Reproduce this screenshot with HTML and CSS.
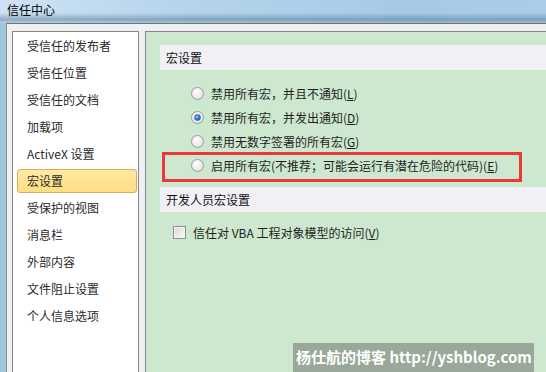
FILE: index.html
```html
<!DOCTYPE html>
<html lang="zh-CN">
<head>
    <meta charset="UTF-8">
    <title>信任中心</title>
    <link rel="stylesheet" href="styles.css">
</head>
<body>
    <div class="window">
        <div class="title-bar">信任中心</div>
        <div class="frame">
            <ul class="nav">
                <li>受信任的发布者</li>
                <li>受信任位置</li>
                <li>受信任的文档</li>
                <li>加载项</li>
                <li>ActiveX 设置</li>
                <li class="active">宏设置</li>
                <li>受保护的视图</li>
                <li>消息栏</li>
                <li>外部内容</li>
                <li>文件阻止设置</li>
                <li>个人信息选项</li>
            </ul>
            <div class="content">
                <div class="section-title">宏设置</div>
                <div class="options">
                    <div class="option"><span class="radio"></span>禁用所有宏，并且不通知(<u>L</u>)</div>
                    <div class="option"><span class="radio checked"></span>禁用所有宏，并发出通知(<u>D</u>)</div>
                    <div class="option"><span class="radio"></span>禁用无数字签署的所有宏(<u>G</u>)</div>
                    <div class="option"><span class="radio"></span>启用所有宏(不推荐；可能会运行有潜在危险的代码)(<u>E</u>)</div>
                </div>
                <div class="section-title">开发人员宏设置</div>
                <div class="check-row"><span class="checkbox"></span>信任对 VBA 工程对象模型的访问(<u>V</u>)</div>

                <!-- red annotation box -->
                <div class="highlight-box"></div>
            </div>
        </div>
        <div class="watermark">杨仕航的博客 http://yshblog.com</div>
    </div>
</body>
</html>
```

FILE: styles.css
```css
body {
    margin: 0;
    width: 546px;
    height: 372px;
    overflow: hidden;
    font-family: "Noto Sans CJK SC", "Microsoft YaHei", sans-serif;
    font-size: 12px;
    color: #1e1e1e;
}
.window {
    position: relative;
    width: 570px;
    height: 372px;
    overflow: hidden;
    background: #9fc7dc;
}
.title-bar {
    height: 23px;
    line-height: 20px;
    padding-left: 7px;
    font-size: 12px;
    color: #000;
    background:
        linear-gradient(to bottom, rgba(255, 255, 255, 0) 55%, rgba(70, 110, 135, 0.45) 85%, rgba(120, 160, 185, 0.3) 100%),
        linear-gradient(to right, #cfe2f4 0%, #b7d5ec 30%, #a6cae6 70%, #aacde8 100%);
}
.frame {
    display: flex;
    margin-left: 6px;
    height: 380px;
    padding: 7px 0 0 5px;
    background: #f0f0f0;
    border-top: 1px solid #6e7478;
    border-left: 1px solid #8a9096;
}
.nav {
    list-style: none;
    margin: 0;
    padding: 2px 0 0;
    width: 125px;
    height: 360px;
    background: #fff;
    border: 1px solid #828790;
}
.nav li {
    height: 22px;
    line-height: 22px;
    margin: 0 1px 3px 4px;
    padding-left: 9px;
    border: 1px solid transparent;
    border-radius: 3px;
    color: #2b2b2b;
    white-space: nowrap;
}
.nav li.active {
    background: linear-gradient(to bottom, #ffeaa4, #fddf82);
    border-color: #d8ad5c;
}
.content {
    position: relative;
    flex: 1;
    margin-left: 6px;
    height: 360px;
    padding: 13px 0 0 14px;
    background: #cde8cf;
    border: 1px solid #828790;
}
.section-title {
    height: 25px;
    line-height: 25px;
    padding-left: 6px;
    background: #f0f0f5;
    color: #111;
}
.options {
    padding: 11px 0 10px 31px;
}
.option {
    display: flex;
    align-items: center;
    height: 24px;
    white-space: nowrap;
}
.radio {
    width: 11px;
    height: 11px;
    margin-right: 7px;
    border: 1px solid #9a9c9e;
    border-radius: 50%;
    background: radial-gradient(circle at 40% 35%, #ffffff 0%, #ececec 55%, #cfd0d1 100%);
    display: flex;
    align-items: center;
    justify-content: center;
}
.radio.checked::after {
    content: "";
    width: 5px;
    height: 5px;
    border-radius: 50%;
    background: radial-gradient(circle at 40% 35%, #8fd0ff 0%, #1a76c4 60%, #0b4d8c 100%);
    border: 1px solid #2f6ea8;
}
.check-row {
    display: flex;
    align-items: center;
    height: 24px;
    margin-top: 8px;
    padding-left: 13px;
    white-space: nowrap;
}
.checkbox {
    width: 11px;
    height: 11px;
    margin-right: 7px;
    border: 1px solid #8f8f8f;
    background: linear-gradient(135deg, #d6d6d6 0%, #eeeeee 60%, #fafafa 100%);
    box-shadow: inset 0 0 0 1px #f4f4f4;
}
.highlight-box {
    position: absolute;
    left: 16px;
    top: 120px;
    width: 354px;
    height: 24px;
    border: 3px solid #e8383a;
}
.watermark {
    position: absolute;
    left: 293px;
    top: 343px;
    width: 238px;
    height: 29px;
    padding-left: 3px;
    line-height: 27px;
    font-size: 15px;
    font-weight: bold;
    color: #fff;
    background: #99a899;
    white-space: nowrap;
}
```
